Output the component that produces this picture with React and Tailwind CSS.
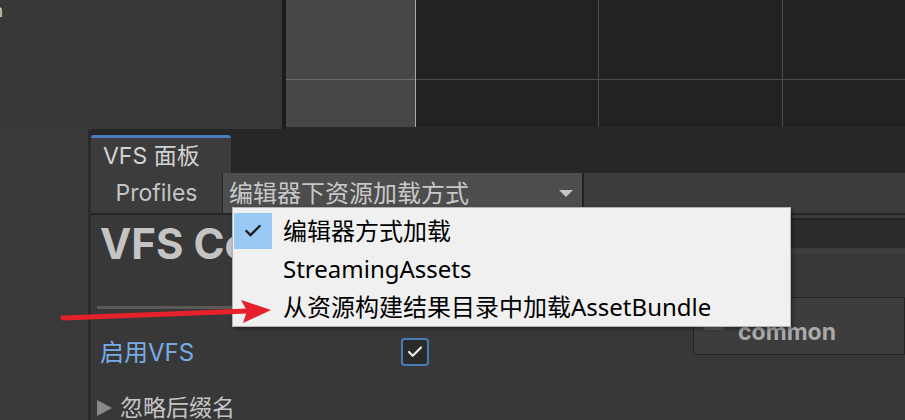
import { Check } from 'lucide-react'

// Scene view grid behind the panel
function SceneGrid() {
  return (
    <svg width="623" height="129" className="block shrink-0">
      <rect x="0" y="0" width="4" height="129" fill="#1c1c1c" />
      <rect x="4" y="0" width="129" height="129" fill="#474747" />
      <rect x="134" y="0" width="489" height="129" fill="#222222" />
      <rect x="4" y="79" width="129" height="1" fill="#6b6b6b" />
      <rect x="134" y="79" width="489" height="1" fill="#4c4c4c" />
      <rect x="133" y="0" width="1" height="129" fill="#a8a8a8" />
      <rect x="316" y="0" width="1" height="129" fill="#4c4c4c" />
      <rect x="500" y="0" width="1" height="129" fill="#4c4c4c" />
      <rect x="4" y="127" width="619" height="2" fill="#2a2a2a" />
    </svg>
  )
}

const options = ['编辑器方式加载', 'StreamingAssets', '从资源构建结果目录中加载AssetBundle']

function Popup() {
  return (
    <div className="absolute left-[232px] top-[207px] w-[559px] h-[120px] bg-[#f0f0f0] border border-[#b4b4b4] shadow-[2px_2px_4px_rgba(0,0,0,0.35)] pt-[4px] font-['Noto_Sans','Noto_Sans_CJK_SC',sans-serif] text-[24px] text-black">
      {options.map((o, i) => (
        <div key={o} className="flex items-center h-[38px]">
          <div className={`ml-[1px] w-[38px] h-[36px] flex items-center justify-center ${i === 0 ? 'bg-[#99c9f4]' : ''}`}>
            {i === 0 && <Check size={20} strokeWidth={2.8} className="text-[#1b1b1b]" />}
          </div>
          <span className="ml-[11px] leading-none whitespace-nowrap">{o}</span>
        </div>
      ))}
    </div>
  )
}

function Arrow() {
  return (
    <svg width="905" height="420" className="absolute inset-0 pointer-events-none">
      <line x1="63" y1="318" x2="248" y2="311" stroke="#e6212b" strokeWidth="5" strokeLinecap="round" />
      <polygon points="271,310 241,300 247,311 243,323" fill="#e6212b" />
    </svg>
  )
}

export default function App() {
  return (
    <div className="relative w-[905px] h-[420px] overflow-hidden bg-[#383838] font-['Inter','Noto_Sans_CJK_SC',sans-serif] text-[23px]">
      {/* top: hierarchy + scene */}
      <div className="flex h-[129px]">
        <div className="w-[282px] bg-[#383838] overflow-hidden">
          <span className="block -ml-[7px] mt-[1px] text-[17px] text-[#d4d4d4] leading-tight">n</span>
        </div>
        <SceneGrid />
      </div>

      <div className="flex h-[291px] overflow-hidden">
        <div className="w-[88px] bg-[#393939]" />
        <div className="w-[3px] bg-[#2b2b2b]" />

        <div className="flex-1 flex flex-col min-w-0">
          {/* tab bar */}
          <div className="h-[44px] shrink-0 bg-[#262626] flex items-end">
            <div className="w-[140px] h-[38px] bg-[#3c3c3c] border-t-[3px] border-[#4b7cc0] rounded-t-[3px] flex items-center pl-[12px] pt-[1px] text-[#d2d2d2]">
              VFS 面板
            </div>
          </div>

          {/* toolbar */}
          <div className="h-[40px] shrink-0 flex bg-[#3c3c3c]">
            <div className="w-[131px] flex items-center justify-center pt-[1px] text-[#c4c4c4]">Profiles</div>
            <div className="w-[1px] bg-[#252525]" />
            <div className="w-[359px] bg-[#4d4d4d] flex items-center justify-between pl-[6px] pr-[9px] pt-[1px] text-[24px] text-[#c8c8c8]">
              <span>编辑器下资源加载方式</span>
              <svg width="14" height="8" viewBox="0 0 14 8"><polygon points="0,0 14,0 7,7" fill="#c4c4c4" /></svg>
            </div>
            <div className="w-[2px] bg-[#232323]" />
            <div className="flex-1" />
          </div>

          {/* content */}
          <div className="flex-1 min-h-0 flex border-t-2 border-[#262626]">
            <div className="w-[600px] pl-[6px] flex flex-col">
              <div className="shrink-0 ml-[3px] mt-[8px] h-[42px] text-[42px] font-bold leading-none text-[#c4c4c4] whitespace-nowrap">VFS Config</div>
              <div className="shrink-0 mt-[41px] h-[3px] w-[420px] bg-[#5a5a5a]" />
              <div className="shrink-0 mt-[29px] h-[28px] flex items-center">
                <span className="ml-[3px] w-[301px] pt-[1px] text-[24px] text-[#78abe6]">启用VFS</span>
                <div className="w-[28px] h-[28px] rounded-[4px] border-2 border-[#4a7ab6] bg-[#2a2a2a] flex items-center justify-center">
                  <Check size={18} strokeWidth={3} className="text-[#e8e8e8]" />
                </div>
              </div>
              <div className="shrink-0 mt-[28px] h-[28px] flex items-center">
                <svg width="15" height="16" viewBox="0 0 15 16" className="shrink-0"><polygon points="0,0 15,8 0,16" fill="#8a8a8a" /></svg>
                <span className="ml-[8px] pt-[1px] text-[#c4c4c4] whitespace-nowrap">忽略后缀名</span>
              </div>
            </div>

            <div className="flex-1 flex flex-col">
              <div className="shrink-0 h-[3px] bg-[#3c3c3c]" />
              <div className="shrink-0 h-[30px] bg-[#2c2c2c] border-t-2 border-[#222222]" />
              <div className="shrink-0 h-[6px] bg-[#3d3d3d]" />
              <div className="shrink-0 h-[43px]" />
              <div className="shrink-0 ml-[2px] h-[58px] bg-[#3d3d3d] border border-[#232323] rounded-bl-[5px] flex items-start pl-[10px]">
                <div className="mt-[12px] w-[20px] h-[20px] rounded-[2px] bg-[#575757]" />
                <span className="ml-[14px] mt-[23px] text-[23px] font-bold leading-none text-[#a9a9a9]">common</span>
              </div>
            </div>
          </div>
        </div>
      </div>

      <Popup />
      <Arrow />
    </div>
  )
}
